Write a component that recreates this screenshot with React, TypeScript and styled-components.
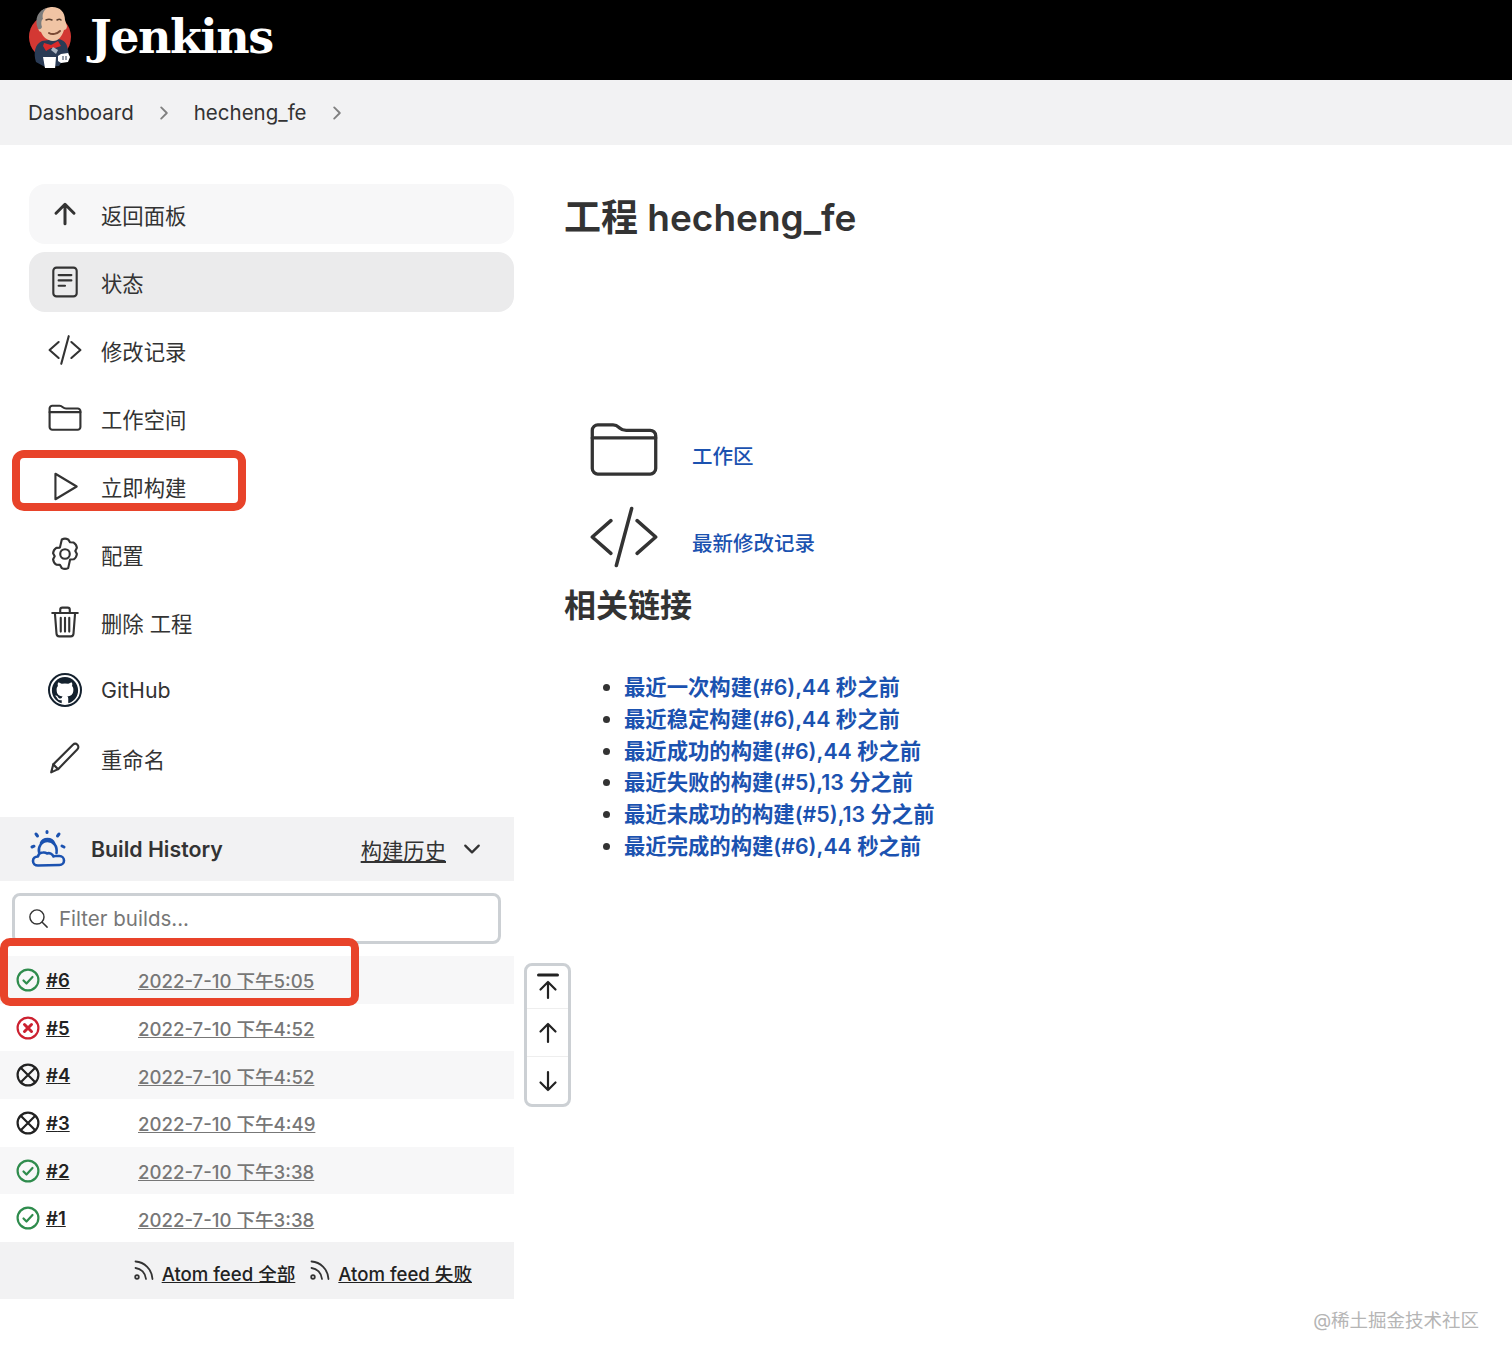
import { ReactNode } from "react";
import styled, { createGlobalStyle } from "styled-components";
import {
  IoArrowUpOutline,
  IoChevronDownOutline,
  IoChevronForwardOutline,
  IoSearchOutline,
  IoLogoGithub,
} from "react-icons/io5";

const FONT = `Inter, "Liberation Sans", "Noto Sans CJK SC", sans-serif`;

const GlobalStyle = createGlobalStyle`
  html, body {
    margin: 0;
    padding: 0;
    background: #fff;
    font-family: ${FONT};
    color: #333;
  }
`;

const Svg = ({ children, size = 34, sw = 2 }: { children: ReactNode; size?: number; sw?: number }) => (
  <svg
    width={size}
    height={size}
    viewBox="0 0 32 32"
    fill="none"
    stroke="currentColor"
    strokeWidth={sw}
    strokeLinecap="round"
    strokeLinejoin="round"
  >
    {children}
  </svg>
);

const DocIcon = () => (
  <Svg>
    <rect x="5" y="2.5" width="22" height="27" rx="3" />
    <path d="M10 9.5h12M10 14.5h12M10 19.5h6" />
  </Svg>
);
const CodeIcon = ({ size = 34, sw = 2 }: { size?: number; sw?: number }) => (
  <Svg size={size} sw={sw}>
    <path d="M10 8.5 1.5 16l8.5 7.5M22 8.5 30.5 16 22 23.5M19.5 3 12.5 29" />
  </Svg>
);
const FolderIcon = ({ size = 34, sw = 2 }: { size?: number; sw?: number }) => (
  <Svg size={size} sw={sw}>
    <path d="M4 4.5h7c1.5 0 2 .5 3 1.4 1 .9 1.6 1.1 3 1.1h11c1.2 0 2.5 1 2.5 2.5v15c0 1.5-1.3 2.5-2.5 2.5H4c-1.2 0-2.5-1-2.5-2.5V7c0-1.500 1.300-2.500 2.500-2.500Z" />
    <path d="M1.500 10.500h29" />
  </Svg>
);
const PlayIcon = () => (
  <Svg>
    <path d="M7 4.500v24L27 16.500Z" />
  </Svg>
);
const GearIcon = () => (
  <Svg>
    <path d="M13 2.500c2-1 4-1 6 0l1.800 2.700 3.400.200c1.700 1.100 2.800 3 3 5l-1.500 2.900 1.500 2.900c-.2 2-1.300 3.900-3 5l-3.400.2L19 29.500c-2 1-4 1-6 0l-1.800-3.100-3.400-.2c-1.700-1.100-2.800-3-3-5l1.500-2.900-1.500-2.900c.2-2 1.300-3.900 3-5l3.400-.2Z" transform="translate(0 -.2)" />
    <circle cx="16" cy="16" r="4.500" />
  </Svg>
);
const TrashIcon = () => (
  <Svg>
    <path d="M4 7.500h24M11.500 7V4.500c0-1 .8-2 2-2h5c1.200 0 2 1 2 2V7" />
    <path d="M6.500 7.500 8 27c.1 1.500 1.200 2.500 2.500 2.500h11c1.300 0 2.400-1 2.500-2.500l1.500-19.500" />
    <path d="M12 12v13M16 12v13M20 12v13" />
  </Svg>
);
const PencilIcon = () => (
  <Svg>
    <path d="M3 29.500 5 22 23.500 3.500c1.200-1.200 3-1.200 4.200 0 1.200 1.200 1.200 3 0 4.200L9.500 26.500Z" />
    <path d="M5 22l4.500 4.500" />
  </Svg>
);

const GithubIcon = () => (
  <GithubRing>
    <IoLogoGithub size={36} />
  </GithubRing>
);

const WeatherIcon = () => (
  <svg width="38" height="38" viewBox="0 0 38 38" fill="none" stroke="#1b52b0" strokeWidth="2.600" strokeLinecap="round" strokeLinejoin="round">
    <path d="M9 35.500c-3 0-5-2-5-4.500s2-4.500 5-4.500c.5-2.500 2.500-4 5-4 1.500-.2 3 .2 4 1 2.500-1 5.500.5 6.500 3 .5-.3 1.500-.5 2-.5h4c2.500 0 4.500 2 4.500 4.500s-2 4.500-4.500 4.500Z" />
    <path d="M10 22c-1-5 2.500-11 8.500-11s10 5 9 12" />
    <path d="M12 13c1-2.500 3.500-4 6.500-4s5.500 1.500 6.500 4" />
    <path d="M18 1.500v1M7 4l1.500 2M30 4l-1.500 2M3 17l2-.8M33 16l2 1" strokeWidth="3" />
  </svg>
);

const SuccessIcon = () => (
  <svg width="24" height="24" viewBox="0 0 24 24" fill="none" stroke="#2f8c4d" strokeWidth="2.200" strokeLinecap="round" strokeLinejoin="round">
    <circle cx="12" cy="12" r="10.400" />
    <path d="M7.500 12.500l3 3 6-6.500" />
  </svg>
);
const FailedIcon = () => (
  <svg width="24" height="24" viewBox="0 0 24 24" fill="none" stroke="#cc2130" strokeWidth="2.200" strokeLinecap="round">
    <circle cx="12" cy="12" r="10.400" />
    <path d="M8.500 8.500l7 7M15.500 8.500l-7 7" strokeWidth="3" />
  </svg>
);
const AbortedIcon = () => (
  <svg width="24" height="24" viewBox="0 0 24 24" fill="none" stroke="#222" strokeWidth="2.200" strokeLinecap="round">
    <circle cx="12" cy="12" r="10.400" />
    <path d="M5 5l14 14M19 5 5 19" />
  </svg>
);

const RssIcon = () => (
  <svg width="22" height="24" viewBox="0 0 22 24" fill="none" stroke="#333" strokeWidth="1.800" strokeLinecap="round">
    <circle cx="4" cy="18" r="1.800" />
    <path d="M2.500 9c5.500.5 10 5 10.500 11" />
    <path d="M2.500 2.500c9 .5 16.500 8 17 17.500" />
  </svg>
);

const TopArrowIcon = () => (
  <svg width="24" height="28" viewBox="0 0 24 28" fill="none" stroke="#222" strokeWidth="2.200" strokeLinecap="round" strokeLinejoin="round">
    <path d="M2.500 2h19" strokeWidth="3" />
    <path d="M12 25V9M4.500 16.500 12 9l7.500 7.500" />
  </svg>
);
const UpArrowIcon = ({ down }: { down?: boolean }) => (
  <svg width="24" height="24" viewBox="0 0 24 24" fill="none" stroke="#222" strokeWidth="2.200" strokeLinecap="round" strokeLinejoin="round" style={down ? { transform: "rotate(180deg)" } : undefined}>
    <path d="M12 21V3M4.500 10.500 12 3l7.500 7.500" />
  </svg>
);

const JenkinsLogo = () => (
  <svg width="48" height="62" viewBox="0 0 48 62">
    <ellipse cx="23" cy="31" rx="21" ry="22" fill="#d33833" />
    <path d="M9 56c-3-9-1-18 6-21l15-2c5 0 9 3 10 7l2 8-6 6-4 6-14 1Z" fill="#2a3b55" />
    <path d="M11 20C8 10 14 2 24 1c9-.5 14 5 14 13l2 6c0 3-2 4-3 4-2 6-5 11-11 11-6-.5-10-4-12-9-2 0-3-3-3-6Z" fill="#f0c4a4" />
    <path d="M11 23C7 13 11 4 20 2c-4 3-5 7-4 11-2 1-2 5-1 8-1 3-3 2-4 2Z" fill="#7d7d7d" />
    <path d="M19 14c2-1 4-1 6 0M30 14c2-1 3-1 4 0" stroke="#5b4030" strokeWidth="1.500" fill="none" strokeLinecap="round" />
    <path d="M22 27c3 2 8 1 11-2" stroke="#7a4a35" strokeWidth="2" fill="none" strokeLinecap="round" />
    <path d="M17 37l7 2 7-4 3 5-6 2-4 0-5 3-3-5Z" fill="#d92a2a" />
    <path d="M26 41l5 3-2 4-5-4Z" fill="#a9b4c2" />
    <path d="M16 51h13l-1 12-10-1Z" fill="#fff" />
    <path d="M31 50l3-2 7-1 2 4-2 5-7 1-3-2Z" fill="#fff" />
    <path d="M36 50v4M39 50v4" stroke="#2a3b55" strokeWidth="1" />
  </svg>
);

const navItems: { label: string; icon: ReactNode; variant?: "soft" | "active"; marked?: boolean }[] = [
  { label: "返回面板", icon: <IoArrowUpOutline size={32} />, variant: "soft" },
  { label: "状态", icon: <DocIcon />, variant: "active" },
  { label: "修改记录", icon: <CodeIcon /> },
  { label: "工作空间", icon: <FolderIcon /> },
  { label: "立即构建", icon: <PlayIcon />, marked: true },
  { label: "配置", icon: <GearIcon /> },
  { label: "删除 工程", icon: <TrashIcon /> },
  { label: "GitHub", icon: <GithubIcon /> },
  { label: "重命名", icon: <PencilIcon /> },
];

type BuildStatus = "ok" | "failed" | "aborted";
const builds: { id: number; date: string; status: BuildStatus }[] = [
  { id: 6, date: "2022-7-10 下午5:05", status: "ok" },
  { id: 5, date: "2022-7-10 下午4:52", status: "failed" },
  { id: 4, date: "2022-7-10 下午4:52", status: "aborted" },
  { id: 3, date: "2022-7-10 下午4:49", status: "aborted" },
  { id: 2, date: "2022-7-10 下午3:38", status: "ok" },
  { id: 1, date: "2022-7-10 下午3:38", status: "ok" },
];

const statusIcons: Record<BuildStatus, ReactNode> = {
  ok: <SuccessIcon />,
  failed: <FailedIcon />,
  aborted: <AbortedIcon />,
};

const links = [
  "最近一次构建(#6),44 秒之前",
  "最近稳定构建(#6),44 秒之前",
  "最近成功的构建(#6),44 秒之前",
  "最近失败的构建(#5),13 分之前",
  "最近未成功的构建(#5),13 分之前",
  "最近完成的构建(#6),44 秒之前",
];

export default function App() {
  return (
    <Page>
      <GlobalStyle />
      <Header>
        <JenkinsLogo />
        <Brand>Jenkins</Brand>
      </Header>
      <Breadcrumb>
        <Crumb>Dashboard</Crumb>
        <CrumbArrow><IoChevronForwardOutline size={20} /></CrumbArrow>
        <Crumb>hecheng_fe</Crumb>
        <CrumbArrow><IoChevronForwardOutline size={20} /></CrumbArrow>
      </Breadcrumb>
      <Layout>
        <Sidebar>
          <Nav>
            {navItems.map((item) => (
              <NavItem key={item.label} $variant={item.variant}>
                <NavIcon>{item.icon}</NavIcon>
                {item.label}
                {item.marked && <NavMark />}
              </NavItem>
            ))}
          </Nav>
          <History>
            <HistoryHeader>
              <WeatherSlot><WeatherIcon /></WeatherSlot>
              <HistoryTitle>Build History</HistoryTitle>
              <HistoryLink>构建历史</HistoryLink>
              <IoChevronDownOutline size={24} />
            </HistoryHeader>
            <FilterBox>
              <IoSearchOutline size={23} />
              <FilterText>Filter builds...</FilterText>
            </FilterBox>
            <BuildList>
              {builds.map((b) => (
                <BuildRow key={b.id}>
                  {statusIcons[b.status]}
                  <BuildId>#{b.id}</BuildId>
                  <BuildDate>{b.date}</BuildDate>
                </BuildRow>
              ))}
              <BuildMark />
            </BuildList>
            <Feeds>
              <RssIcon />
              <FeedLink>Atom feed 全部</FeedLink>
              <RssIcon />
              <FeedLink>Atom feed 失败</FeedLink>
            </Feeds>
            <Scroller>
              <ScrollButton $h={42}><TopArrowIcon /></ScrollButton>
              <ScrollButton $h={47}><UpArrowIcon /></ScrollButton>
              <ScrollButton $h={47}><UpArrowIcon down /></ScrollButton>
            </Scroller>
          </History>
        </Sidebar>
        <Content>
          <Title>工程 hecheng_fe</Title>
          <IconLinks>
            <IconLink>
              <IconSlot><FolderIcon size={70} sw={1.5} /></IconSlot>
              <BlueLink>工作区</BlueLink>
            </IconLink>
            <IconLink>
              <IconSlot><CodeIcon size={70} sw={1.6} /></IconSlot>
              <BlueLink>最新修改记录</BlueLink>
            </IconLink>
          </IconLinks>
          <SubTitle>相关链接</SubTitle>
          <LinkList>
            {links.map((l) => (
              <LinkItem key={l}>{l}</LinkItem>
            ))}
          </LinkList>
        </Content>
      </Layout>
      <Watermark>@稀土掘金技术社区</Watermark>
    </Page>
  );
}

const Page = styled.div`
  position: relative;
  width: 1512px;
  height: 1364px;
  overflow: hidden;
`;

const Header = styled.header`
  height: 80px;
  background: #000;
  display: flex;
  align-items: center;
  padding: 0 0 6px 27px;
  box-sizing: border-box;
`;

const Brand = styled.div`
  margin-left: 15px;
  color: #fff;
  font: 700 46px "DejaVu Serif", "Liberation Serif", serif;
  letter-spacing: -1.500px;
  line-height: 60px;
`;

const Breadcrumb = styled.nav`
  height: 65px;
  background: #f2f2f3;
  display: flex;
  align-items: center;
  padding-left: 28px;
`;

const Crumb = styled.span`
  font-size: 20.500px;
  color: #333;
`;

const CrumbArrow = styled.span`
  display: flex;
  color: #808080;
  margin: 0 20px;
`;

const Layout = styled.div`
  display: grid;
  grid-template-columns: 514px 1fr;
  column-gap: 50px;
`;

const Sidebar = styled.aside`
  padding-top: 39px;
`;

const Nav = styled.div`
  display: flex;
  flex-direction: column;
  row-gap: 8px;
  padding-left: 29px;
`;

const NavItem = styled.div<{ $variant?: "soft" | "active" }>`
  position: relative;
  height: 60px;
  display: flex;
  align-items: center;
  border-radius: 16px;
  font-size: 21.330px;
  color: #333;
  background: ${(p) => (p.$variant === "soft" ? "#f7f7f8" : p.$variant === "active" ? "#ebebec" : "transparent")};
`;

const NavIcon = styled.span`
  width: 72px;
  flex: none;
  display: flex;
  justify-content: center;
  color: #333;
`;

const GithubRing = styled.span`
  width: 30px;
  height: 30px;
  border: 2.500px solid #14212e;
  border-radius: 50%;
  display: flex;
  align-items: center;
  justify-content: center;
  overflow: hidden;
  color: #14212e;
`;

const NavMark = styled.span`
  position: absolute;
  left: -17px;
  top: -6px;
  width: 234px;
  height: 61px;
  box-sizing: border-box;
  border: 8px solid #e8432a;
  border-radius: 12px;
`;

const History = styled.section`
  position: relative;
  margin-top: 29px;
`;

const HistoryHeader = styled.div`
  height: 64px;
  background: #f2f2f3;
  display: flex;
  align-items: center;
  padding: 0 30px 0 29px;
  color: #333;
`;

const WeatherSlot = styled.span`
  display: flex;
  width: 62px;
`;

const HistoryTitle = styled.div`
  flex: 1;
  font-size: 21.330px;
  font-weight: 600;
`;

const HistoryLink = styled.span`
  font-size: 21.330px;
  text-decoration: underline;
  margin-right: 14px;
`;

const FilterBox = styled.div`
  margin: 12px 13px 12px 12px;
  height: 51px;
  box-sizing: border-box;
  border: 3px solid #ccd0d4;
  border-radius: 8px;
  display: flex;
  align-items: center;
  padding-left: 12px;
  color: #333;
`;

const FilterText = styled.span`
  margin-left: 9px;
  font-size: 20.500px;
  color: #777;
`;

const BuildList = styled.div`
  position: relative;
`;

const BuildRow = styled.div`
  height: 47.700px;
  display: flex;
  align-items: center;
  padding-left: 16px;
  &:nth-child(odd) {
    background: #f7f7f8;
  }
`;

const BuildId = styled.span`
  width: 92px;
  margin-left: 6px;
  font-size: 18.500px;
  font-weight: 600;
  color: #222;
  text-decoration: underline;
`;

const BuildDate = styled.span`
  font-size: 18.600px;
  font-weight: 500;
  color: #777;
  text-decoration: underline;
`;

const BuildMark = styled.span`
  position: absolute;
  left: 0;
  top: -18px;
  width: 359px;
  height: 68px;
  box-sizing: border-box;
  border: 8px solid #e8432a;
  border-radius: 10px;
`;

const Feeds = styled.div`
  height: 57px;
  background: #f2f2f3;
  display: flex;
  align-items: center;
  justify-content: flex-end;
  padding-right: 42px;
`;

const FeedLink = styled.span`
  margin: 4px 14px 0 7px;
  font-size: 18.600px;
  font-weight: 500;
  color: #222;
  text-decoration: underline;
  &:last-child {
    margin-right: 0;
  }
`;

const Scroller = styled.div`
  position: absolute;
  left: 524px;
  top: 146px;
  width: 47px;
  box-sizing: border-box;
  border: 3px solid #ccd0d4;
  border-radius: 8px;
  background: #fff;
`;

const ScrollButton = styled.div<{ $h: number }>`
  height: ${(p) => p.$h}px;
  display: flex;
  align-items: center;
  justify-content: center;
  &:not(:last-child) {
    border-bottom: 1px solid #eee;
  }
`;

const Content = styled.main`
  padding-top: 49px;
`;

const Title = styled.h1`
  margin: 0;
  font-size: 37px;
  line-height: 48px;
  font-weight: 600;
  color: #333;
`;

const IconLinks = styled.div`
  margin-top: 173px;
  display: flex;
  flex-direction: column;
  row-gap: 17px;
`;

const IconLink = styled.div`
  height: 70px;
  display: flex;
  align-items: center;
  padding-left: 25px;
`;

const IconSlot = styled.span`
  display: flex;
  width: 103px;
  color: #333;
`;

const BlueLink = styled.a`
  font-size: 20.500px;
  font-weight: 500;
  color: #1b52b0;
  margin-top: 9px;
`;

const SubTitle = styled.h2`
  margin: 12px 0 0;
  font-size: 32px;
  line-height: 44px;
  font-weight: 600;
  color: #333;
`;

const LinkList = styled.ul`
  margin: 44px 0 0;
  padding: 0 0 0 60px;
  color: #333;
`;

const LinkItem = styled.li`
  height: 31.800px;
  line-height: 31.800px;
  font-size: 21.330px;
  font-weight: 600;
  color: #1b52b0;
  &::marker {
    color: #333;
  }
`;

const Watermark = styled.div`
  position: absolute;
  right: 33px;
  top: 1308px;
  font-size: 18.500px;
  line-height: 24px;
  color: #b5b5b5;
`;
